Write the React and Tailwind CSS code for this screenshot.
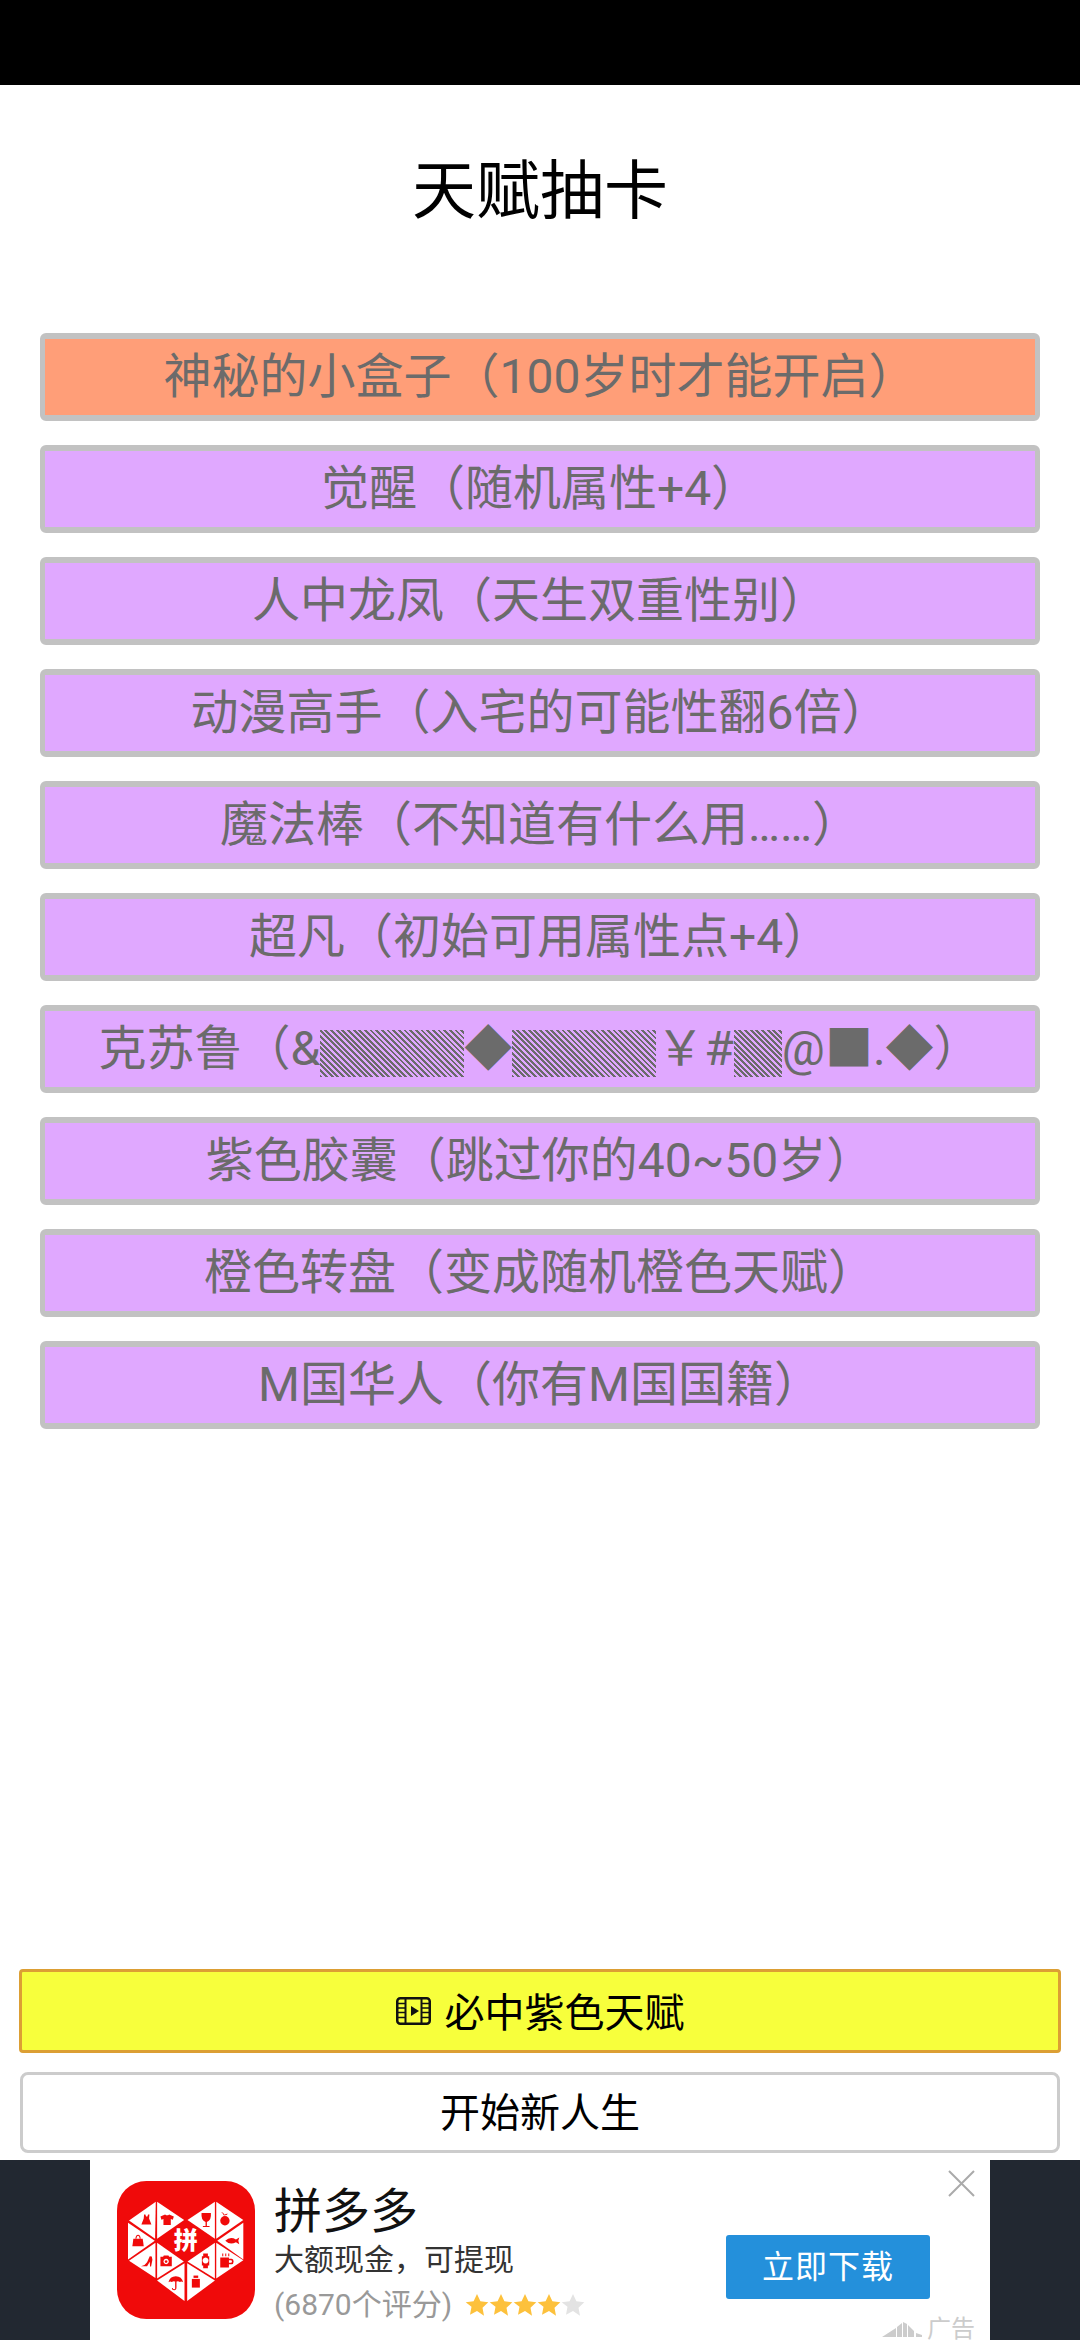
import React from "react";

const talents = [
  { id: 1, text: "神秘的小盒子（100岁时才能开启）", bg: "bg-[#ff9e78]" },
  { id: 2, text: "觉醒（随机属性+4）", bg: "bg-[#e0a8ff]" },
  { id: 3, text: "人中龙凤（天生双重性别）", bg: "bg-[#e0a8ff]" },
  { id: 4, text: "动漫高手（入宅的可能性翻6倍）", bg: "bg-[#e0a8ff]" },
  { id: 5, text: "魔法棒（不知道有什么用……）", bg: "bg-[#e0a8ff]" },
  { id: 6, text: "超凡（初始可用属性点+4）", bg: "bg-[#e0a8ff]" },
  { id: 7, text: "克苏鲁（&▒▒▒◆▒▒▒￥#▒@■.◆）", bg: "bg-[#e0a8ff]" },
  { id: 8, text: "紫色胶囊（跳过你的40~50岁）", bg: "bg-[#e0a8ff]" },
  { id: 9, text: "橙色转盘（变成随机橙色天赋）", bg: "bg-[#e0a8ff]" },
  { id: 10, text: "M国华人（你有M国国籍）", bg: "bg-[#e0a8ff]" },
];

const logoTriangles = [
  "168,95 88,151 166,206",
  "172,95 172,206 253,150",
  "345,95 263,150 345,206",
  "349,95 349,206 430,150",
  "85,158 165,212 85,268",
  "430,158 352,212 430,268",
  "88,272 167,218 167,323",
  "172,218 252,274 172,325",
  "345,218 263,274 345,325",
  "349,218 430,270 349,325",
  "172,331 254,279 254,392",
  "262,279 345,331 262,392",
];

// the shade blocks in the glitched talent name come out denser than the font's own glyph
function TalentText({ text }) {
  const parts = text.split(/(▒+)/);
  return (
    <span className="leading-[60px]">
      {parts.map((part, i) =>
        part.startsWith("▒") ? (
          <span
            key={i}
            style={{ width: part.length * 48 }}
            className="inline-block h-[47px] align-[-5px] leading-[47px] text-transparent bg-[repeating-linear-gradient(45deg,#6b6b6b_0_2px,transparent_2px_4px)]"
          >
            {part}
          </span>
        ) : (
          <span key={i}>{part}</span>
        )
      )}
    </span>
  );
}

function PddLogo() {
  return (
    <svg viewBox="52 33 413 413" className="w-[138px] h-[138px] shrink-0">
      <rect x="52" y="33" width="413" height="413" rx="88" fill="#f00a0a" />
      {logoTriangles.map((points) => (
        <polygon key={points} points={points} fill="#fff" />
      ))}
      <g fill="#f00a0a">
        <path d="M133 133h4l2 6h4l2-6h4l-1 12 7 18h-30l7-18z" />
        <path d="M196 133l-14 6 3 10 6-2v18h22v-18l6 2 3-10-14-6q-6 5-12 0z" />
        <path d="M305 129h28q2 22-12 27v12h8v3h-20v-3h8v-12q-14-5-12-27z" />
        <circle cx="375" cy="152" r="14" />
        <path d="M372 136q-4-8-9-10 7 0 11 8 5-4 10-3-3 5-12 5z" />
        <path d="M101 206h28l3 22h-34z" />
        <path d="M107 206q1-12 8-12t8 12h-3q-1-9-5-9t-5 9z" />
        <path d="M376 212q14-14 32-4l10-6-3 10 3 10-10-6q-18 10-32-4z" />
        <path d="M124 288q12-2 18-12l8-18 6 1 2 10-4 20h-3l-1-14-8 13z" />
        <path d="M182 260h8l2-4h14l2 4h8v28h-34zM199 266a8 8 0 1 0 .1 0zM199 270a4 4 0 1 1-.1 0z" fillRule="evenodd" />
        <path d="M310 250h14v8h4v28h-4v8h-14v-8h-4v-28h4zM317 262a9 9 0 1 0 .1 0z" fillRule="evenodd" />
        <path d="M361 262h26v4h8q6 0 6 8t-6 8h-8v10h-26zM387 270v8h6q3 0 3-4t-3-4z" fillRule="evenodd" />
        <path d="M367 250h3v8h-3zM376 250h3v8h-3zM385 250h3v8h-3z" />
        <path d="M206 336q4-18 22-18t22 18q-5-4-10-1-6-4-12 0-6-4-12 0-5-3-10 1z" />
        <path d="M226 334h4v18q0 8-7 8t-7-7h3q0 4 4 4t3-5z" />
        <path d="M276 326h24v26h-24z" />
        <path d="M281 316h14v7h-14z" />
        <polygon points="258,154 345,212 258,274 170,212" />
      </g>
      <text
        x="258"
        y="237"
        textAnchor="middle"
        fill="#fff"
        fontSize="72"
        fontWeight="900"
        fontFamily="'Noto Sans CJK SC', sans-serif"
      >
        拼
      </text>
    </svg>
  );
}

function FilmIcon() {
  return (
    <svg viewBox="0 0 35 28" className="w-[35px] h-[28px] shrink-0">
      <rect x="1.25" y="1.25" width="32.5" height="25.5" rx="3" fill="none" stroke="#111" strokeWidth="2.5" />
      <path d="M9.5 2v24M25.5 2v24" stroke="#111" strokeWidth="2" />
      <path d="M2 6.5h7M2 11h7M2 15.500h7M2 20.500h7M26 6.500h7M26 11h7M26 15.500h7M26 20.500h7" stroke="#111" strokeWidth="1.5" />
      <path d="M15 9l8 5-8 5z" fill="#111" />
    </svg>
  );
}

function Star({ color }) {
  return (
    <svg viewBox="0 0 24 24" className="w-[24px] h-[24px]" fill={color}>
      <path d="M12 1l3.4 7.3 7.9 1-5.8 5.5 1.5 7.9L12 18l-7 3.7 1.5-7.9L.7 9.3l7.9-1z" />
    </svg>
  );
}

function App() {
  return (
    <div className="h-[2340px] flex flex-col overflow-hidden bg-white font-['Roboto','Noto_Sans_CJK_SC',sans-serif]">
      <div className="h-[85px] shrink-0 bg-black" />

      <h1 className="mt-[65px] h-[84px] shrink-0 text-center text-[64px] leading-[84px] text-black">
        天赋抽卡
      </h1>

      <div className="mt-[99px] flex-1 flex flex-col gap-[24px] px-[40px]">
        {talents.map((talent) => (
          <div
            key={talent.id}
            className={`h-[88px] shrink-0 flex items-center justify-center whitespace-nowrap border-x-[5px] border-y-[6px] border-[#c2c2c2] rounded-[6px] text-[48px] text-[#6b6b6b] ${talent.bg}`}
          >
            <TalentText text={talent.text} />
          </div>
        ))}
      </div>

      <div className="shrink-0 flex flex-col gap-[19px] px-[19px] pb-[7px]">
        <button className="h-[84px] flex items-center justify-center gap-[14px] border-[3px] border-[#dc9f34] rounded-[4px] bg-[#f7ff3c] text-[40px] text-black">
          <FilmIcon />
          <span className="pt-[5px]">必中紫色天赋</span>
        </button>
        <button className="h-[81px] mx-[1px] flex items-center justify-center border-[3px] border-[#cccccc] rounded-[8px] bg-white text-[40px] text-black">
          <span className="pt-[2px]">开始新人生</span>
        </button>
      </div>

      <div className="h-[180px] shrink-0 flex justify-center bg-[#222831]">
        <div className="relative w-[900px] flex gap-[19px] bg-white pl-[27px] pt-[21px]">
          <PddLogo />
          <div className="flex flex-col pt-[4px]">
            <div className="text-[48px] leading-[54px] text-[#111]">拼多多</div>
            <div className="text-[30px] leading-[42px] text-[#333]">大额现金，可提现</div>
            <div className="mt-[3px] flex items-center gap-[13px]">
              <span className="text-[30px] leading-[42px] text-[#999]">(6870个评分)</span>
              <div className="flex">
                <Star color="#fdc13c" />
                <Star color="#fdc13c" />
                <Star color="#fdc13c" />
                <Star color="#fdc13c" />
                <Star color="#e3e3e3" />
              </div>
            </div>
          </div>

          <button className="absolute left-[636px] top-[75px] w-[204px] h-[64px] rounded-[3px] bg-[#2490db] text-[32px] tracking-[1px] text-white">
            立即下载
          </button>

          <svg viewBox="0 0 27 27" className="absolute left-[858px] top-[10px] w-[27px] h-[27px]">
            <path d="M1 1l25 25M26 1L1 26" stroke="#aaa" strokeWidth="2" fill="none" />
          </svg>

          <div className="absolute left-[792px] top-[155px] flex items-center gap-[3px]">
            <svg viewBox="0 0 42 18" className="w-[42px] h-[18px]">
              <path d="M0 17L14 8v9zM15 7l5-4v14h-5zM21 2l4 2v13h-4zM26 5l6 6v6h-6zM34 13l6 2v2h-6z" fill="#ccc" />
            </svg>
            <span className="text-[24px] leading-[28px] text-[#ccc]">广告</span>
          </div>
        </div>
      </div>
    </div>
  );
}

export default App;
